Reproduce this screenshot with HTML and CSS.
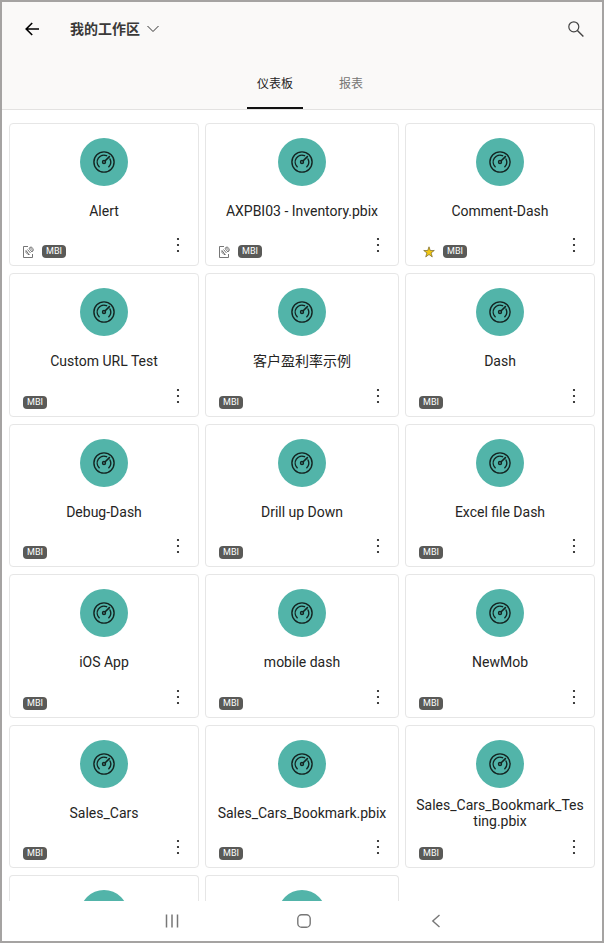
FILE: index.html
```html
<!DOCTYPE html>
<html lang="zh-CN">
<head>
<meta charset="utf-8">
<meta name="viewport" content="width=device-width, initial-scale=1">
<title>我的工作区</title>
<link rel="stylesheet" href="styles.css">
</head>
<body>
<svg class="sprite" aria-hidden="true">
  <symbol id="gauge" viewBox="0 0 22 22">
    <g fill="none" stroke="#142421" stroke-linecap="round">
      <circle cx="11" cy="11" r="10.1" stroke-width="1.4"/>
      <path d="M6.2 15.8A6.8 6.8 0 0 1 13.6 4.7M17 8A6.8 6.8 0 0 1 15.8 15.8" stroke-width="1.4"/>
      <path d="M12.2 9.8L16.4 5.6" stroke-width="1.6"/>
      <circle cx="11" cy="11" r="1.5" stroke-width="1.4"/>
    </g>
  </symbol>
  <symbol id="note" viewBox="0 0 11 12">
    <g fill="none" stroke="#666" stroke-width=".9">
      <path d="M5 .5H.5v11h9V8"/>
      <path d="M3 4.5L6 8.5M4.5 3.5L7.5 7M3 4.5v2L5 8.5h1.5M6 2.5L9 6M7 1.5L10 4.5M8 .8L10.5 3M6 2.5L8 .8M9 6L10.5 3.5"/>
    </g>
  </symbol>
  <symbol id="star" viewBox="0 0 12 12">
    <path d="M6 .8L7.3 4.5H11.3L8.1 6.9L9.3 10.9L6 8.5L2.7 10.9L3.9 6.9L.7 4.5H4.7Z" fill="#f2c811" stroke="#75652c" stroke-width=".7"/>
  </symbol>
  <symbol id="dots" viewBox="0 0 4 16">
    <g fill="#111"><circle cx="2" cy="2" r="1.1"/><circle cx="2" cy="8" r="1.1"/><circle cx="2" cy="14" r="1.1"/></g>
  </symbol>
</svg>
<div class="app">
  <header class="header">
    <div class="bar">
      <button class="icon-btn" aria-label="返回">
        <svg width="14" height="14" viewBox="0 0 14 14" fill="none" stroke="#000" stroke-width="1.6"><path d="M14 7H1.3M7.2 1L1.2 7L7.2 13"/></svg>
      </button>
      <button class="workspace">
        <span>我的工作区</span>
        <svg width="12" height="8" viewBox="0 0 12 8" fill="none" stroke="#333" stroke-width="1"><path d="M.5 1L6 6.5L11.5 1"/></svg>
      </button>
      <button class="icon-btn search" aria-label="搜索">
        <svg width="16" height="16" viewBox="0 0 16 16" fill="none" stroke="#444" stroke-width="1.2"><circle cx="5.8" cy="5.8" r="5"/><path d="M9.4 9.4L15.4 15.4" stroke-width="1.4"/></svg>
      </button>
    </div>
    <nav class="tabs">
      <a class="tab active" href="#dashboards" aria-current="page">仪表板</a>
      <a class="tab" href="#reports">报表</a>
    </nav>
  </header>
  <main class="grid" id="dashboards"></main>
  <footer class="nav">
    <button aria-label="最近"><svg width="14" height="14" viewBox="0 0 14 14" stroke="#777" stroke-width="1.5"><path d="M1.5 .5v13M7 .5v13M12.5 .5v13"/></svg></button>
    <button aria-label="主页"><svg width="14" height="14" viewBox="0 0 14 14" fill="none" stroke="#777" stroke-width="1.4"><rect x=".8" y=".8" width="12.4" height="12.4" rx="3.8"/></svg></button>
    <button aria-label="后退"><svg width="14" height="14" viewBox="0 0 14 14" fill="none" stroke="#777" stroke-width="1.4"><path d="M10.5 1L3.8 7L10.5 13"/></svg></button>
  </footer>
</div>
<script src="script.js"></script>
</body>
</html>
```
FILE: styles.css
```css
* { box-sizing: border-box; }

body {
  margin: 0;
  background: #fff;
  color: #252423;
  font-family: Roboto, "Noto Sans CJK SC", sans-serif;
  font-size: 14px;
}

button {
  margin: 0;
  padding: 0;
  border: 0;
  background: none;
  color: inherit;
  font: inherit;
  cursor: pointer;
}

svg { display: block; }

.sprite {
  position: absolute;
  width: 0;
  height: 0;
}

.app {
  display: flex;
  flex-direction: column;
  min-height: 100vh;
  border: 2px solid #a5a3a2;
}

.header {
  background: #faf9f8;
  border-bottom: 1px solid #e3e2e1;
}

.bar {
  display: flex;
  align-items: center;
  height: 53px;
  padding: 0 18px 0 22px;
}

.icon-btn {
  display: flex;
  justify-content: center;
  width: 16px;
}

.search { margin-left: auto; }

.workspace {
  display: flex;
  align-items: center;
  gap: 7px;
  margin-left: 30px;
  color: #3b3a39;
  font-weight: 700;
  line-height: 20px;
}

.tabs {
  display: flex;
  justify-content: center;
  gap: 26px;
  height: 54px;
  padding-left: 16px;
}

.tab {
  display: flex;
  align-items: center;
  padding: 2px 10px 0;
  border-bottom: 2px solid transparent;
  color: #767574;
  font-size: 12px;
  text-decoration: none;
}

.tab.active {
  border-color: #111;
  color: #252423;
}

.grid {
  flex: 1;
  display: grid;
  grid-template-columns: 190fr 194fr 190fr;
  grid-template-rows: repeat(5, minmax(143px, 1fr)) 26px;
  gap: 7px 6px;
  padding: 13px 7px 0;
  overflow: hidden;
}

.card {
  display: flex;
  flex-direction: column;
  align-items: center;
  min-width: 0;
  padding: 14px 8px 7px;
  border: 1px solid #e6e6e6;
  border-radius: 4px;
}

.card.cut {
  overflow: hidden;
  border-bottom: 0;
  border-radius: 4px 4px 0 0;
}

.disc {
  display: flex;
  flex: none;
  align-items: center;
  justify-content: center;
  width: 48px;
  height: 48px;
  border-radius: 50%;
  background: #52b4a9;
}

.title {
  display: flex;
  flex: none;
  align-items: center;
  justify-content: center;
  width: 100%;
  height: 32px;
  margin: 9px 0 0;
  font-size: 14px;
  font-weight: 400;
  line-height: 16px;
  text-align: center;
}

.title span {
  min-width: 0;
  overflow-wrap: anywhere;
}

.meta {
  display: flex;
  align-items: flex-end;
  gap: 8px;
  width: 100%;
  margin-top: auto;
  padding: 0 5px;
}

.badge {
  width: 24px;
  border-radius: 4px;
  background: #5a5a58;
  color: #fff;
  font-size: 9px;
  line-height: 13px;
  text-align: center;
}

.more {
  margin-left: auto;
  padding: 0 5px 5px;
}

.nav {
  display: grid;
  grid-template-columns: 132px 132px 132px;
  justify-content: center;
  height: 40px;
  padding-left: 3px;
}

.nav button {
  display: flex;
  align-items: center;
  justify-content: center;
}
```
FILE: script.js
```js
const dashboards = [
  { name: "Alert", icon: "note" },
  { name: "AXPBI03 - Inventory.pbix", icon: "note" },
  { name: "Comment-Dash", icon: "star" },
  { name: "Custom URL Test" },
  { name: "客户盈利率示例" },
  { name: "Dash" },
  { name: "Debug-Dash" },
  { name: "Drill up Down" },
  { name: "Excel file Dash" },
  { name: "iOS App" },
  { name: "mobile dash" },
  { name: "NewMob" },
  { name: "Sales_Cars" },
  { name: "Sales_Cars_Bookmark.pbix" },
  { name: "Sales_Cars_Bookmark_Testing.pbix" },
  { cut: true },
  { cut: true }
];

const icons = {
  note: '<svg width="11" height="12"><use href="#note"/></svg>',
  star: '<svg width="16" height="12" viewBox="0 0 16 12"><use href="#star" x="4" width="12" height="12"/></svg>'
};

const disc = '<div class="disc"><svg width="22" height="22"><use href="#gauge"/></svg></div>';

document.getElementById("dashboards").innerHTML = dashboards.map(d => d.cut
  ? `<article class="card cut">${disc}</article>`
  : `<article class="card">${disc}
      <h2 class="title"><span>${d.name}</span></h2>
      <div class="meta">${icons[d.icon] || ""}<span class="badge">MBI</span>
        <button class="more" aria-label="更多选项"><svg width="4" height="16"><use href="#dots"/></svg></button>
      </div>
    </article>`).join("");
```
